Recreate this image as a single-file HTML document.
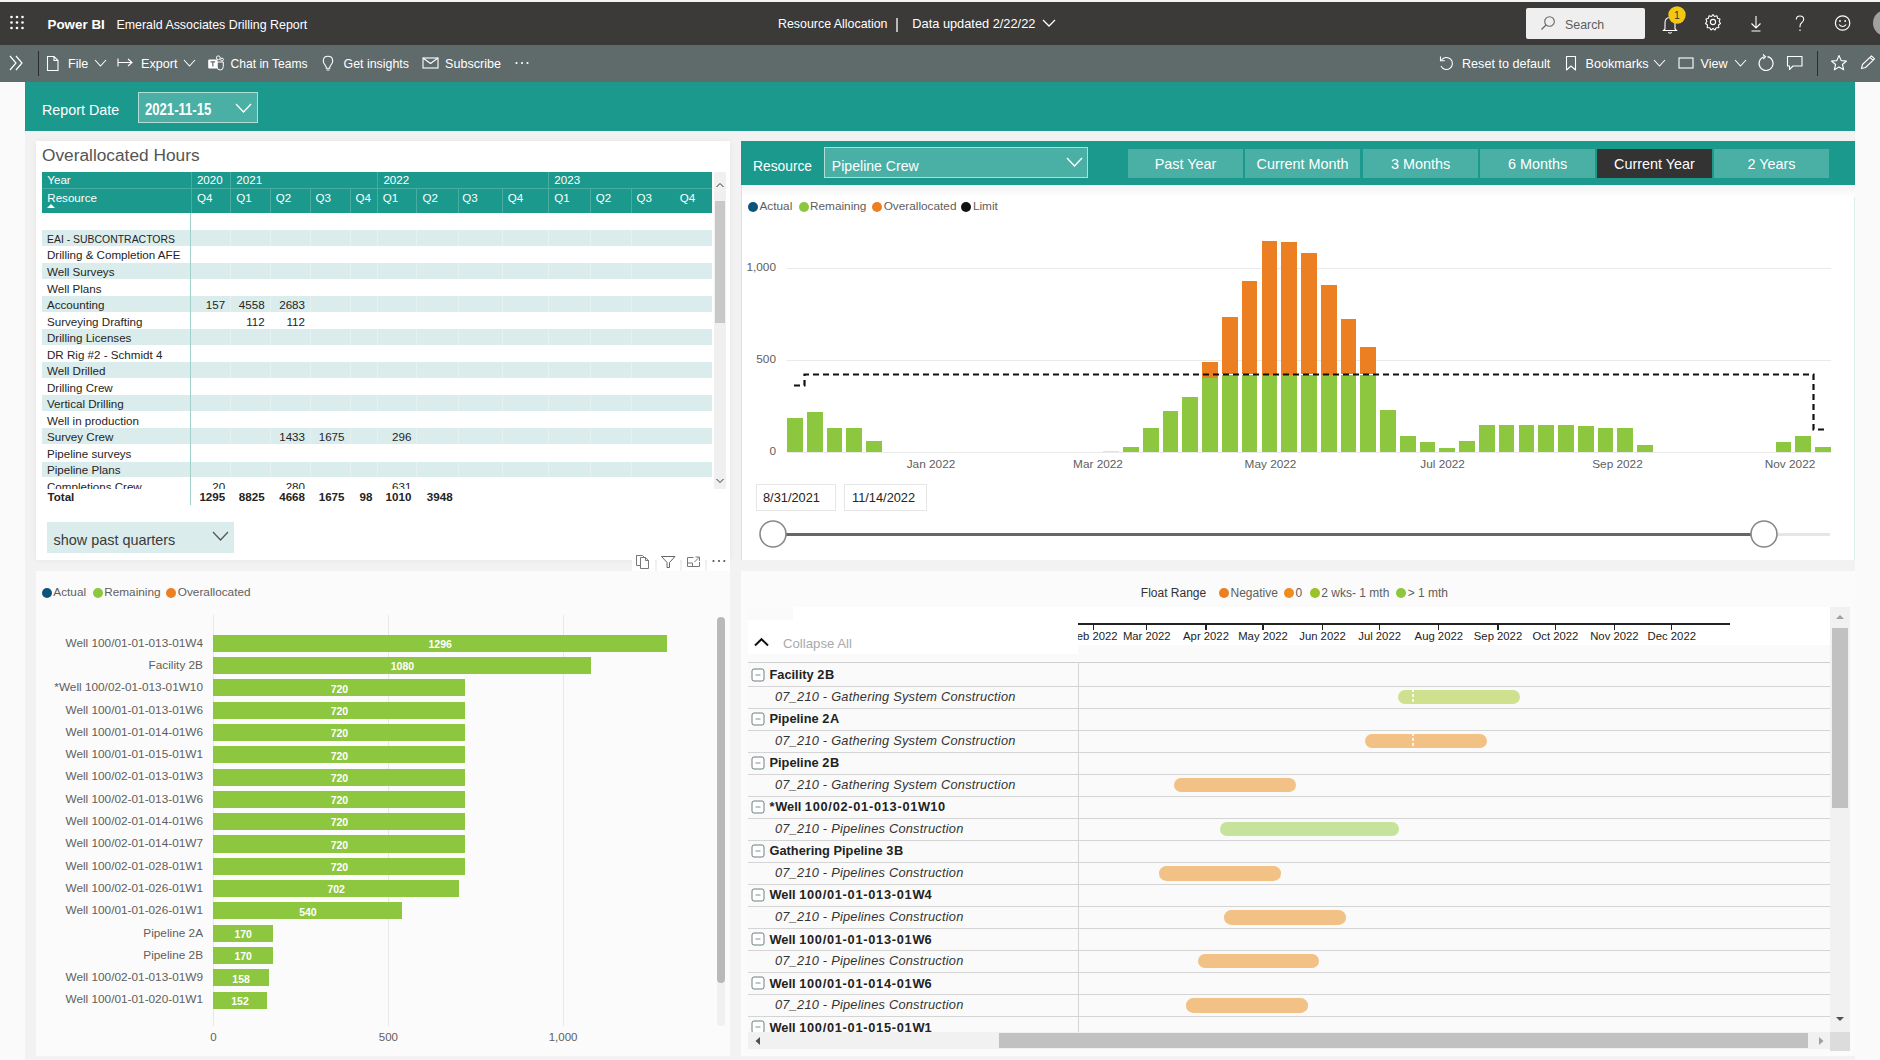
<!DOCTYPE html><html><head><meta charset="utf-8"><style>
html,body{margin:0;padding:0;width:1880px;height:1060px;overflow:hidden;background:#fafafa;font-family:"Liberation Sans", sans-serif;}
div{position:absolute;box-sizing:border-box;}
.t{white-space:nowrap;}
</style></head><body>
<div style="left:0px;top:0px;width:1880px;height:2px;background:#f3f3f3"></div>
<div style="left:0px;top:2px;width:1880px;height:43px;background:#3b3a39"></div>
<svg style="position:absolute;left:0px;top:0px;" width="40" height="45" viewBox="0 0 40 45"><circle cx="11.5" cy="17" r="1.3" fill="#fff"/><circle cx="11.5" cy="22.5" r="1.3" fill="#fff"/><circle cx="11.5" cy="28" r="1.3" fill="#fff"/><circle cx="17" cy="17" r="1.3" fill="#fff"/><circle cx="17" cy="22.5" r="1.3" fill="#fff"/><circle cx="17" cy="28" r="1.3" fill="#fff"/><circle cx="22.5" cy="17" r="1.3" fill="#fff"/><circle cx="22.5" cy="22.5" r="1.3" fill="#fff"/><circle cx="22.5" cy="28" r="1.3" fill="#fff"/></svg>
<div class="t" style="left:47.5px;top:17.7px;font-size:13.4px;line-height:13.4px;color:#fff;font-weight:700">Power BI</div>
<div class="t" style="left:116.5px;top:18.5px;font-size:12.4px;line-height:12.4px;color:#fff">Emerald Associates Drilling Report</div>
<div class="t" style="left:778.0px;top:18.2px;font-size:12.4px;line-height:12.4px;color:#fff">Resource Allocation</div>
<div style="left:896px;top:18px;width:1.6px;height:14px;background:#b8b8b8"></div>
<div class="t" style="left:912.3px;top:17.9px;font-size:12.8px;line-height:12.8px;color:#fff">Data updated 2/22/22</div>
<svg style="position:absolute;left:1040px;top:16px;" width="18" height="14" viewBox="0 0 18 14"><path d="M3 4 L9 10 L15 4" stroke="#fff" stroke-width="1.3" fill="none"/></svg>
<div style="left:1526px;top:8px;width:119px;height:31px;background:#efefef;border-radius:2px"></div>
<svg style="position:absolute;left:1538px;top:14px;" width="20" height="20" viewBox="0 0 20 20"><circle cx="11.5" cy="7.5" r="4.8" stroke="#666" stroke-width="1.1" fill="none"/><path d="M8 11 L3.5 15.5" stroke="#666" stroke-width="1.2"/></svg>
<div class="t" style="left:1565.0px;top:18.7px;font-size:12.4px;line-height:12.4px;color:#605e5c">Search</div>
<svg style="position:absolute;left:1660px;top:10px;" width="22" height="24" viewBox="0 0 22 24"><path d="M5 19 L5 13 Q5 7.5 10 7.5 Q15 7.5 15 13 L15 19 L16.5 20.5 L3.5 20.5 Z" stroke="#fff" stroke-width="1.1" fill="none"/><path d="M8.3 22.3 Q10 23.8 11.7 22.3" stroke="#fff" stroke-width="1.1" fill="none"/></svg>
<svg style="position:absolute;left:1667px;top:5px;" width="20" height="20" viewBox="0 0 20 20"><circle cx="10" cy="10" r="8.7" fill="#f2c811"/><text x="10" y="13.8" font-size="10.5" text-anchor="middle" fill="#333" font-family="Liberation Sans">1</text></svg>
<svg style="position:absolute;left:1703px;top:12px;" width="20" height="20" viewBox="0 0 20 20"><circle cx="10" cy="10" r="2.6" stroke="#fff" stroke-width="1.1" fill="none"/><path d="M10 2.5 L11.5 4.5 L14 3.8 L14.6 6.3 L17 7 L16.2 9.5 L17.5 11.5 L15.5 13 L15.8 15.6 L13.2 15.7 L12 18 L10 16.5 L8 18 L6.8 15.7 L4.2 15.6 L4.5 13 L2.5 11.5 L3.8 9.5 L3 7 L5.4 6.3 L6 3.8 L8.5 4.5 Z" stroke="#fff" stroke-width="1.1" fill="none" stroke-linejoin="round"/></svg>
<svg style="position:absolute;left:1746px;top:12px;" width="20" height="22" viewBox="0 0 20 22"><path d="M10 4 L10 16 M5.5 11.5 L10 16 L14.5 11.5 M5.5 19 L14.5 19" stroke="#fff" stroke-width="1.1" fill="none"/></svg>
<svg style="position:absolute;left:1790px;top:11px;" width="20" height="24" viewBox="0 0 20 24"><path d="M6.3 8.5 Q6.3 5 10 5 Q13.7 5 13.7 8.3 Q13.7 10.5 11.6 11.8 Q10 13 10 15.2 L10 16.3" stroke="#fff" stroke-width="1.1" fill="none"/><circle cx="10" cy="19.3" r="0.8" fill="#fff"/></svg>
<svg style="position:absolute;left:1832px;top:12px;" width="22" height="22" viewBox="0 0 22 22"><circle cx="10.6" cy="11" r="7.2" stroke="#fff" stroke-width="1.2" fill="none"/><circle cx="8" cy="9" r="0.9" fill="#fff"/><circle cx="13.2" cy="9" r="0.9" fill="#fff"/><path d="M7 12.5 Q10.6 16.5 14.2 12.5" stroke="#fff" stroke-width="1.1" fill="none"/></svg>
<svg style="position:absolute;left:1864px;top:8px;" width="16" height="30" viewBox="0 0 16 30"><circle cx="22" cy="15" r="13" fill="#a0a0a0"/></svg>
<div style="left:0px;top:45px;width:1880px;height:37px;background:#5f6a6b"></div>
<svg style="position:absolute;left:6px;top:53px;" width="22" height="20" viewBox="0 0 22 20"><path d="M4 3 L10 10 L4 17 M10 3 L16 10 L10 17" stroke="#fff" stroke-width="1.2" fill="none"/></svg>
<div style="left:38px;top:51px;width:1px;height:25px;background:#2d2d2d"></div>
<svg style="position:absolute;left:45px;top:55px;" width="16" height="17" viewBox="0 0 16 17"><path d="M2.5 1.5 L9 1.5 L13 5.5 L13 15.5 L2.5 15.5 Z M9 1.5 L9 5.5 L13 5.5" stroke="#fff" stroke-width="1.1" fill="none"/></svg>
<div class="t" style="left:68.0px;top:57.8px;font-size:12.6px;line-height:12.6px;color:#fff">File</div>
<svg style="position:absolute;left:93.5px;top:59px;" width="13" height="8" viewBox="0 0 13 8"><path d="M1 1 L6.5 7 L12 1" stroke="#fff" stroke-width="1.1" fill="none"/></svg>
<svg style="position:absolute;left:116px;top:56px;" width="20" height="14" viewBox="0 0 20 14"><path d="M2 2.5 L2 10.5 M2 6.5 L16 6.5 M12 3 L16 6.5 L12 10" stroke="#fff" stroke-width="1.1" fill="none"/></svg>
<div class="t" style="left:141.0px;top:57.8px;font-size:12.6px;line-height:12.6px;color:#fff">Export</div>
<svg style="position:absolute;left:183px;top:59px;" width="13" height="8" viewBox="0 0 13 8"><path d="M1 1 L6.5 7 L12 1" stroke="#fff" stroke-width="1.1" fill="none"/></svg>
<svg style="position:absolute;left:206px;top:54px;" width="20" height="20" viewBox="0 0 20 20"><circle cx="12.3" cy="3.8" r="1.9" stroke="#fff" stroke-width="1" fill="none"/><circle cx="16" cy="5.5" r="1.4" stroke="#fff" stroke-width="1" fill="none"/><path d="M11 8 L17.3 8 L17.3 12.5 Q17.3 16 14.2 16 Q11 16 11 12.5 Z" stroke="#fff" stroke-width="1" fill="none"/><rect x="2.2" y="5.6" width="9.3" height="9" rx="1" fill="#fff"/><path d="M4.6 7.8 L9.1 7.8 M6.85 7.8 L6.85 12.6" stroke="#5f6a6b" stroke-width="1.2"/></svg>
<div class="t" style="left:230.5px;top:58.2px;font-size:12.1px;line-height:12.1px;color:#fff">Chat in Teams</div>
<svg style="position:absolute;left:320px;top:54px;" width="16" height="18" viewBox="0 0 16 18"><path d="M8 2.3 Q3.3 2.3 3.3 7 Q3.3 9.2 5.3 11.3 Q6.2 12.3 6.3 14.3 L9.7 14.3 Q9.8 12.3 10.7 11.3 Q12.7 9.2 12.7 7 Q12.7 2.3 8 2.3 Z M6.5 16 L9.5 16" stroke="#fff" stroke-width="1.1" fill="none"/></svg>
<div class="t" style="left:343.5px;top:58.0px;font-size:12.4px;line-height:12.4px;color:#fff">Get insights</div>
<svg style="position:absolute;left:421px;top:55px;" width="20" height="16" viewBox="0 0 20 16"><rect x="2" y="3" width="15" height="10" stroke="#fff" stroke-width="1.1" fill="none"/><path d="M2 3 L9.5 8.5 L17 3" stroke="#fff" stroke-width="1.1" fill="none"/></svg>
<div class="t" style="left:445.0px;top:57.8px;font-size:12.6px;line-height:12.6px;color:#fff">Subscribe</div>
<svg style="position:absolute;left:512px;top:58px;" width="20" height="10" viewBox="0 0 20 10"><circle cx="4.5" cy="5" r="1.1" fill="#fff"/><circle cx="10" cy="5" r="1.1" fill="#fff"/><circle cx="15.5" cy="5" r="1.1" fill="#fff"/></svg>
<svg style="position:absolute;left:1437px;top:54px;" width="18" height="18" viewBox="0 0 18 18"><path d="M4.5 6 A6 6 0 1 1 4 12" stroke="#fff" stroke-width="1.1" fill="none"/><path d="M3.5 2.5 L3.5 6.8 L7.8 6.8" stroke="#fff" stroke-width="1.1" fill="none"/></svg>
<div class="t" style="left:1462.0px;top:57.8px;font-size:12.6px;line-height:12.6px;color:#fff">Reset to default</div>
<svg style="position:absolute;left:1563px;top:54px;" width="16" height="18" viewBox="0 0 16 18"><path d="M3.5 2.5 L12.5 2.5 L12.5 16 L8 12 L3.5 16 Z" stroke="#fff" stroke-width="1.1" fill="none" stroke-linejoin="round"/></svg>
<div class="t" style="left:1585.5px;top:57.8px;font-size:12.6px;line-height:12.6px;color:#fff">Bookmarks</div>
<svg style="position:absolute;left:1653px;top:59px;" width="13" height="8" viewBox="0 0 13 8"><path d="M1 1 L6.5 7 L12 1" stroke="#fff" stroke-width="1.1" fill="none"/></svg>
<svg style="position:absolute;left:1677px;top:55px;" width="18" height="16" viewBox="0 0 18 16"><rect x="2" y="3" width="14" height="10" stroke="#fff" stroke-width="1.1" fill="none"/></svg>
<div class="t" style="left:1700.5px;top:57.8px;font-size:12.6px;line-height:12.6px;color:#fff">View</div>
<svg style="position:absolute;left:1734px;top:59px;" width="13" height="8" viewBox="0 0 13 8"><path d="M1 1 L6.5 7 L12 1" stroke="#fff" stroke-width="1.1" fill="none"/></svg>
<svg style="position:absolute;left:1756px;top:53px;" width="20" height="20" viewBox="0 0 20 20"><path d="M8.2 3.7 A7 7 0 1 0 11.5 3.6" stroke="#fff" stroke-width="1.1" fill="none"/><path d="M7 1.5 L9.5 3.8 L7.2 6.2" stroke="#fff" stroke-width="1.1" fill="none"/></svg>
<svg style="position:absolute;left:1785px;top:54px;" width="20" height="18" viewBox="0 0 20 18"><path d="M2.5 2.5 L17 2.5 L17 12 L8 12 L4.5 15.5 L4.5 12 L2.5 12 Z" stroke="#fff" stroke-width="1.1" fill="none" stroke-linejoin="round"/></svg>
<div style="left:1817px;top:51px;width:1px;height:25px;background:#2d2d2d"></div>
<svg style="position:absolute;left:1830px;top:54px;" width="18" height="18" viewBox="0 0 18 18"><path d="M9 1.5 L11.2 6.6 L16.5 7 L12.4 10.5 L13.7 15.8 L9 13 L4.3 15.8 L5.6 10.5 L1.5 7 L6.8 6.6 Z" stroke="#fff" stroke-width="1.1" fill="none" stroke-linejoin="round"/></svg>
<svg style="position:absolute;left:1858px;top:54px;" width="20" height="18" viewBox="0 0 20 18"><path d="M3.5 14.5 L4.5 10.5 L13.5 1.8 L16.5 4.8 L7.5 13.5 Z M12 3.3 L15 6.3" stroke="#fff" stroke-width="1.1" fill="none" stroke-linejoin="round"/></svg>
<div style="left:25px;top:82px;width:1830px;height:978px;background:#f2f2f2"></div>
<div style="left:25px;top:82px;width:1830px;height:49px;background:#1b998d"></div>
<div class="t" style="left:42.0px;top:102.8px;font-size:14.3px;line-height:14.3px;color:#fff">Report Date</div>
<div style="left:138px;top:92px;width:120px;height:31px;background:#4aafa5;border:1.5px solid #b5ddd8"></div>
<div class="t" style="left:144.7px;top:102.2px;font-size:15.6px;line-height:15.6px;color:#fff;font-weight:700;transform:scaleX(0.84);transform-origin:0 0">2021-11-15</div>
<svg style="position:absolute;left:235px;top:102.5px;" width="17" height="10" viewBox="0 0 17 10"><path d="M1 1 L8.5 9 L16 1" stroke="#fff" stroke-width="1.3" fill="none"/></svg>
<div style="left:36px;top:141px;width:694px;height:419px;background:#fff;box-shadow:0 0 6px rgba(0,0,0,0.06)"></div>
<div class="t" style="left:42.0px;top:146.6px;font-size:17.3px;line-height:17.3px;color:#555">Overallocated Hours</div>
<div style="left:42px;top:172px;width:670px;height:40.5px;background:#1b998d"></div>
<div style="left:42px;top:187.5px;width:670px;height:1px;background:#48aca1"></div>
<div style="left:191px;top:172px;width:1px;height:40.5px;background:#48aca1"></div>
<div style="left:230px;top:172px;width:1px;height:40.5px;background:#48aca1"></div>
<div style="left:270px;top:188px;width:1px;height:24.5px;background:#48aca1"></div>
<div style="left:310px;top:188px;width:1px;height:24.5px;background:#48aca1"></div>
<div style="left:350px;top:188px;width:1px;height:24.5px;background:#48aca1"></div>
<div style="left:377px;top:172px;width:1px;height:40.5px;background:#48aca1"></div>
<div style="left:416px;top:188px;width:1px;height:24.5px;background:#48aca1"></div>
<div style="left:458px;top:188px;width:1px;height:24.5px;background:#48aca1"></div>
<div style="left:502px;top:188px;width:1px;height:24.5px;background:#48aca1"></div>
<div style="left:548px;top:172px;width:1px;height:40.5px;background:#48aca1"></div>
<div style="left:590px;top:188px;width:1px;height:24.5px;background:#48aca1"></div>
<div style="left:631px;top:188px;width:1px;height:24.5px;background:#48aca1"></div>
<div class="t" style="left:47.3px;top:174.4px;font-size:11.6px;line-height:11.6px;color:#fff">Year</div>
<div class="t" style="left:47.3px;top:191.7px;font-size:11.6px;line-height:11.6px;color:#fff">Resource</div>
<svg style="position:absolute;left:45px;top:203px;" width="12" height="6" viewBox="0 0 12 6"><path d="M2 5 L6 1 L10 5 Z" fill="#fff"/></svg>
<div class="t" style="left:196.9px;top:174.4px;font-size:11.6px;line-height:11.6px;color:#fff">2020</div>
<div class="t" style="left:236.3px;top:174.4px;font-size:11.6px;line-height:11.6px;color:#fff">2021</div>
<div class="t" style="left:383.4px;top:174.4px;font-size:11.6px;line-height:11.6px;color:#fff">2022</div>
<div class="t" style="left:554.3px;top:174.4px;font-size:11.6px;line-height:11.6px;color:#fff">2023</div>
<div class="t" style="left:196.9px;top:191.7px;font-size:11.6px;line-height:11.6px;color:#fff">Q4</div>
<div class="t" style="left:236.3px;top:191.7px;font-size:11.6px;line-height:11.6px;color:#fff">Q1</div>
<div class="t" style="left:275.7px;top:191.7px;font-size:11.6px;line-height:11.6px;color:#fff">Q2</div>
<div class="t" style="left:315.5px;top:191.7px;font-size:11.6px;line-height:11.6px;color:#fff">Q3</div>
<div class="t" style="left:355.6px;top:191.7px;font-size:11.6px;line-height:11.6px;color:#fff">Q4</div>
<div class="t" style="left:382.8px;top:191.7px;font-size:11.6px;line-height:11.6px;color:#fff">Q1</div>
<div class="t" style="left:422.5px;top:191.7px;font-size:11.6px;line-height:11.6px;color:#fff">Q2</div>
<div class="t" style="left:462.3px;top:191.7px;font-size:11.6px;line-height:11.6px;color:#fff">Q3</div>
<div class="t" style="left:507.7px;top:191.7px;font-size:11.6px;line-height:11.6px;color:#fff">Q4</div>
<div class="t" style="left:554.3px;top:191.7px;font-size:11.6px;line-height:11.6px;color:#fff">Q1</div>
<div class="t" style="left:595.8px;top:191.7px;font-size:11.6px;line-height:11.6px;color:#fff">Q2</div>
<div class="t" style="left:636.6px;top:191.7px;font-size:11.6px;line-height:11.6px;color:#fff">Q3</div>
<div class="t" style="left:679.7px;top:191.7px;font-size:11.6px;line-height:11.6px;color:#fff">Q4</div>
<div style="left:0;top:213px;width:730px;height:276px;overflow:hidden">
<div style="left:42px;top:17.0px;width:670px;height:15.9px;background:#daeceb"></div>
<div class="t" style="left:47px;top:19.9px;font-size:11.6px;line-height:11.6px;color:#252423;transform:scaleX(0.9);transform-origin:0 0">EAI - SUBCONTRACTORS</div>
<div class="t" style="left:47px;top:36.4px;font-size:11.6px;line-height:11.6px;color:#252423">Drilling &amp; Completion AFE</div>
<div style="left:42px;top:50.1px;width:670px;height:15.9px;background:#daeceb"></div>
<div class="t" style="left:47px;top:52.9px;font-size:11.6px;line-height:11.6px;color:#252423">Well Surveys</div>
<div class="t" style="left:47px;top:69.5px;font-size:11.6px;line-height:11.6px;color:#252423">Well Plans</div>
<div style="left:42px;top:83.2px;width:670px;height:15.9px;background:#daeceb"></div>
<div class="t" style="left:47px;top:86.0px;font-size:11.6px;line-height:11.6px;color:#252423">Accounting</div>
<div class="t" style="right:504.8px;top:86.0px;font-size:11.6px;line-height:11.6px;color:#252423;text-align:right">157</div>
<div class="t" style="right:465.4px;top:86.0px;font-size:11.6px;line-height:11.6px;color:#252423;text-align:right">4558</div>
<div class="t" style="right:425.0px;top:86.0px;font-size:11.6px;line-height:11.6px;color:#252423;text-align:right">2683</div>
<div class="t" style="left:47px;top:102.5px;font-size:11.6px;line-height:11.6px;color:#252423">Surveying Drafting</div>
<div class="t" style="right:465.4px;top:102.5px;font-size:11.6px;line-height:11.6px;color:#252423;text-align:right">112</div>
<div class="t" style="right:425.0px;top:102.5px;font-size:11.6px;line-height:11.6px;color:#252423;text-align:right">112</div>
<div style="left:42px;top:116.2px;width:670px;height:15.9px;background:#daeceb"></div>
<div class="t" style="left:47px;top:119.1px;font-size:11.6px;line-height:11.6px;color:#252423">Drilling Licenses</div>
<div class="t" style="left:47px;top:135.6px;font-size:11.6px;line-height:11.6px;color:#252423">DR Rig #2 - Schmidt 4</div>
<div style="left:42px;top:149.3px;width:670px;height:15.9px;background:#daeceb"></div>
<div class="t" style="left:47px;top:152.1px;font-size:11.6px;line-height:11.6px;color:#252423">Well Drilled</div>
<div class="t" style="left:47px;top:168.7px;font-size:11.6px;line-height:11.6px;color:#252423">Drilling Crew</div>
<div style="left:42px;top:182.3px;width:670px;height:15.9px;background:#daeceb"></div>
<div class="t" style="left:47px;top:185.2px;font-size:11.6px;line-height:11.6px;color:#252423">Vertical Drilling</div>
<div class="t" style="left:47px;top:201.7px;font-size:11.6px;line-height:11.6px;color:#252423">Well in production</div>
<div style="left:42px;top:215.4px;width:670px;height:15.9px;background:#daeceb"></div>
<div class="t" style="left:47px;top:218.2px;font-size:11.6px;line-height:11.6px;color:#252423">Survey Crew</div>
<div class="t" style="right:425.0px;top:218.2px;font-size:11.6px;line-height:11.6px;color:#252423;text-align:right">1433</div>
<div class="t" style="right:385.5px;top:218.2px;font-size:11.6px;line-height:11.6px;color:#252423;text-align:right">1675</div>
<div class="t" style="right:318.6px;top:218.2px;font-size:11.6px;line-height:11.6px;color:#252423;text-align:right">296</div>
<div class="t" style="left:47px;top:234.8px;font-size:11.6px;line-height:11.6px;color:#252423">Pipeline surveys</div>
<div style="left:42px;top:248.5px;width:670px;height:15.9px;background:#daeceb"></div>
<div class="t" style="left:47px;top:251.3px;font-size:11.6px;line-height:11.6px;color:#252423">Pipeline Plans</div>
<div class="t" style="left:47px;top:267.8px;font-size:11.6px;line-height:11.6px;color:#252423">Completions Crew</div>
<div class="t" style="right:504.8px;top:267.8px;font-size:11.6px;line-height:11.6px;color:#252423;text-align:right">20</div>
<div class="t" style="right:425.0px;top:267.8px;font-size:11.6px;line-height:11.6px;color:#252423;text-align:right">280</div>
<div class="t" style="right:318.6px;top:267.8px;font-size:11.6px;line-height:11.6px;color:#252423;text-align:right">631</div>
<div style="left:230px;top:0;width:1px;height:276px;background:rgba(255,255,255,0.3)"></div>
<div style="left:270px;top:0;width:1px;height:276px;background:rgba(255,255,255,0.3)"></div>
<div style="left:310px;top:0;width:1px;height:276px;background:rgba(255,255,255,0.3)"></div>
<div style="left:350px;top:0;width:1px;height:276px;background:rgba(255,255,255,0.3)"></div>
<div style="left:377px;top:0;width:1px;height:276px;background:rgba(255,255,255,0.3)"></div>
<div style="left:416px;top:0;width:1px;height:276px;background:rgba(255,255,255,0.3)"></div>
<div style="left:458px;top:0;width:1px;height:276px;background:rgba(255,255,255,0.3)"></div>
<div style="left:502px;top:0;width:1px;height:276px;background:rgba(255,255,255,0.3)"></div>
<div style="left:548px;top:0;width:1px;height:276px;background:rgba(255,255,255,0.3)"></div>
<div style="left:590px;top:0;width:1px;height:276px;background:rgba(255,255,255,0.3)"></div>
<div style="left:631px;top:0;width:1px;height:276px;background:rgba(255,255,255,0.3)"></div>
</div>
<div style="left:190px;top:213px;width:1px;height:292px;background:#9fd0ca"></div>
<div class="t" style="right:1654.8px;top:491.4px;font-size:11.6px;line-height:11.6px;text-align:right;color:#252423;font-weight:700">1295</div>
<div class="t" style="right:1615.4px;top:491.4px;font-size:11.6px;line-height:11.6px;text-align:right;color:#252423;font-weight:700">8825</div>
<div class="t" style="right:1575.0px;top:491.4px;font-size:11.6px;line-height:11.6px;text-align:right;color:#252423;font-weight:700">4668</div>
<div class="t" style="right:1535.5px;top:491.4px;font-size:11.6px;line-height:11.6px;text-align:right;color:#252423;font-weight:700">1675</div>
<div class="t" style="right:1507.6px;top:491.4px;font-size:11.6px;line-height:11.6px;text-align:right;color:#252423;font-weight:700">98</div>
<div class="t" style="right:1468.6px;top:491.4px;font-size:11.6px;line-height:11.6px;text-align:right;color:#252423;font-weight:700">1010</div>
<div class="t" style="right:1427.4px;top:491.4px;font-size:11.6px;line-height:11.6px;text-align:right;color:#252423;font-weight:700">3948</div>
<div class="t" style="left:47.5px;top:491.4px;font-size:11.6px;line-height:11.6px;color:#252423;font-weight:700">Total</div>
<div style="left:714px;top:172px;width:12px;height:317px;background:#f0f0f0"></div>
<div style="left:715px;top:201px;width:10px;height:122px;background:#c8c8c8"></div>
<svg style="position:absolute;left:714px;top:180px;" width="12" height="10" viewBox="0 0 12 10"><path d="M2.5 7 L6 3.5 L9.5 7" stroke="#333" stroke-width="1" fill="none"/></svg>
<svg style="position:absolute;left:714px;top:476px;" width="12" height="10" viewBox="0 0 12 10"><path d="M2.5 3 L6 6.5 L9.5 3" stroke="#333" stroke-width="1" fill="none"/></svg>
<div style="left:47px;top:522.4px;width:187px;height:30.2px;background:#daeceb"></div>
<div class="t" style="left:53.6px;top:532.5px;font-size:14.4px;line-height:14.4px;color:#3a3a3a">show past quarters</div>
<svg style="position:absolute;left:212px;top:531px;" width="17" height="10" viewBox="0 0 17 10"><path d="M1 1 L8.5 9 L16 1" stroke="#555" stroke-width="1.2" fill="none"/></svg>
<div style="left:632px;top:551px;width:23px;height:20px;background:#fff"></div>
<div style="left:657px;top:551px;width:23px;height:20px;background:#fff"></div>
<div style="left:682px;top:551px;width:23px;height:20px;background:#fff"></div>
<div style="left:707px;top:551px;width:23px;height:20px;background:#fff"></div>
<svg style="position:absolute;left:632px;top:551px;" width="23" height="20" viewBox="0 0 23 20"><path d="M7.5 4.5 L4.5 4.5 L4.5 14.5 L8 14.5 M8.5 6.5 L13.5 6.5 L16.5 9.5 L16.5 17.5 L8.5 17.5 Z M13.5 6.5 L13.5 9.5 L16.5 9.5 M4.5 4.5 L10.5 4.5 L12.5 6.5" stroke="#777" stroke-width="1" fill="none"/></svg>
<svg style="position:absolute;left:657px;top:551px;" width="23" height="20" viewBox="0 0 23 20"><path d="M4.5 5.5 L18 5.5 L12.5 11.5 L12.5 16.5 L10 16.5 L10 11.5 Z" stroke="#666" stroke-width="1" fill="none" stroke-linejoin="round"/></svg>
<svg style="position:absolute;left:682px;top:551px;" width="23" height="20" viewBox="0 0 23 20"><path d="M11.5 6.5 L5.5 6.5 L5.5 15.5 L17.5 15.5 L17.5 11 M5.5 12 L10.5 12 L10.5 15.5 M12.5 11 L17 6.5 M13.5 6 L17.5 6 L17.5 10" stroke="#777" stroke-width="1" fill="none"/></svg>
<svg style="position:absolute;left:707px;top:551px;" width="23" height="20" viewBox="0 0 23 20"><circle cx="6.5" cy="10" r="1.1" fill="#555"/><circle cx="12" cy="10" r="1.1" fill="#555"/><circle cx="17.3" cy="10" r="1.1" fill="#555"/></svg>
<div style="left:741px;top:141px;width:1114px;height:332px;background:#fff;border-left:1px solid #cfe6e3;border-right:1px solid #dcefed"></div>
<div style="left:741px;top:141px;width:1114px;height:44px;background:#1b998d"></div>
<div class="t" style="left:753.0px;top:160.1px;font-size:13.8px;line-height:13.8px;color:#fff">Resource</div>
<div style="left:824px;top:147px;width:264px;height:31px;background:#4aafa5;border:1.5px solid #b5ddd8"></div>
<div class="t" style="left:831.8px;top:158.8px;font-size:14.1px;line-height:14.1px;color:#fff">Pipeline Crew</div>
<svg style="position:absolute;left:1066px;top:157px;" width="17" height="10" viewBox="0 0 17 10"><path d="M1 1 L8.5 9 L16 1" stroke="#fff" stroke-width="1.4" fill="none"/></svg>
<div style="left:1128px;top:149px;width:115px;height:29px;background:#4aafa5"></div>
<div class="t" style="left:1035.5px;width:300px;top:156.8px;font-size:14.4px;line-height:14.4px;text-align:center;color:#fff">Past Year</div>
<div style="left:1245px;top:149px;width:115px;height:29px;background:#4aafa5"></div>
<div class="t" style="left:1152.5px;width:300px;top:156.8px;font-size:14.4px;line-height:14.4px;text-align:center;color:#fff">Current Month</div>
<div style="left:1363px;top:149px;width:115px;height:29px;background:#4aafa5"></div>
<div class="t" style="left:1270.5px;width:300px;top:156.8px;font-size:14.4px;line-height:14.4px;text-align:center;color:#fff">3 Months</div>
<div style="left:1480px;top:149px;width:115px;height:29px;background:#4aafa5"></div>
<div class="t" style="left:1387.5px;width:300px;top:156.8px;font-size:14.4px;line-height:14.4px;text-align:center;color:#fff">6 Months</div>
<div style="left:1597px;top:149px;width:115px;height:29px;background:#333333"></div>
<div class="t" style="left:1504.5px;width:300px;top:156.8px;font-size:14.4px;line-height:14.4px;text-align:center;color:#fff">Current Year</div>
<div style="left:1714px;top:149px;width:115px;height:29px;background:#4aafa5"></div>
<div class="t" style="left:1621.5px;width:300px;top:156.8px;font-size:14.4px;line-height:14.4px;text-align:center;color:#fff">2 Years</div>
<div style="left:742px;top:185px;width:1113px;height:12px;background:linear-gradient(#f3f3f3,#fff)"></div>
<svg style="position:absolute;left:747px;top:200.5px;" width="12" height="12" viewBox="0 0 12 12"><circle cx="6" cy="6" r="5" fill="#0c5479"/></svg>
<div class="t" style="left:759.5px;top:201.0px;font-size:11.8px;line-height:11.8px;color:#605e5c">Actual</div>
<svg style="position:absolute;left:797.5px;top:200.5px;" width="12" height="12" viewBox="0 0 12 12"><circle cx="6" cy="6" r="5" fill="#8dc63f"/></svg>
<div class="t" style="left:810.0px;top:201.0px;font-size:11.8px;line-height:11.8px;color:#605e5c">Remaining</div>
<svg style="position:absolute;left:871.2px;top:200.5px;" width="12" height="12" viewBox="0 0 12 12"><circle cx="6" cy="6" r="5" fill="#ec7f22"/></svg>
<div class="t" style="left:883.7px;top:201.0px;font-size:11.8px;line-height:11.8px;color:#605e5c">Overallocated</div>
<svg style="position:absolute;left:960.4px;top:200.5px;" width="12" height="12" viewBox="0 0 12 12"><circle cx="6" cy="6" r="5" fill="#111"/></svg>
<div class="t" style="left:972.9px;top:201.0px;font-size:11.8px;line-height:11.8px;color:#605e5c">Limit</div>
<div style="left:787px;top:267.5px;width:1044px;height:1px;background:#eaeaea"></div>
<div class="t" style="right:1104.0px;top:261.9px;font-size:11.8px;line-height:11.8px;text-align:right;color:#605e5c">1,000</div>
<div style="left:787px;top:359.5px;width:1044px;height:1px;background:#eaeaea"></div>
<div class="t" style="right:1104.0px;top:354.3px;font-size:11.8px;line-height:11.8px;text-align:right;color:#605e5c">500</div>
<div style="left:787px;top:451.5px;width:1044px;height:1px;background:#eaeaea"></div>
<div class="t" style="right:1104.0px;top:446.3px;font-size:11.8px;line-height:11.8px;text-align:right;color:#605e5c">0</div>
<div style="left:787.0px;top:418px;width:15.8px;height:33.9px;background:#8dc63f"></div>
<div style="left:806.8px;top:411.9px;width:15.8px;height:40.0px;background:#8dc63f"></div>
<div style="left:826.5px;top:427.8px;width:15.8px;height:24.1px;background:#8dc63f"></div>
<div style="left:846.3px;top:428.2px;width:15.8px;height:23.7px;background:#8dc63f"></div>
<div style="left:866.1px;top:441px;width:15.8px;height:10.9px;background:#8dc63f"></div>
<div style="left:1103.3px;top:450.5px;width:15.8px;height:1.4px;background:#d9ecbf"></div>
<div style="left:1123.1px;top:446.8px;width:15.8px;height:5.1px;background:#8dc63f"></div>
<div style="left:1142.9px;top:428.2px;width:15.8px;height:23.7px;background:#8dc63f"></div>
<div style="left:1162.6px;top:410.8px;width:15.8px;height:41.1px;background:#8dc63f"></div>
<div style="left:1182.4px;top:397.2px;width:15.8px;height:54.7px;background:#8dc63f"></div>
<div style="left:1202.2px;top:377.9px;width:15.8px;height:74.0px;background:#8dc63f"></div>
<div style="left:1202.2px;top:361.9px;width:15.8px;height:16.0px;background:#ec7f22"></div>
<div style="left:1221.9px;top:374.5px;width:15.8px;height:77.4px;background:#8dc63f"></div>
<div style="left:1221.9px;top:316.8px;width:15.8px;height:57.7px;background:#ec7f22"></div>
<div style="left:1241.7px;top:374.5px;width:15.8px;height:77.4px;background:#8dc63f"></div>
<div style="left:1241.7px;top:281.1px;width:15.8px;height:93.4px;background:#ec7f22"></div>
<div style="left:1261.5px;top:374.5px;width:15.8px;height:77.4px;background:#8dc63f"></div>
<div style="left:1261.5px;top:241px;width:15.8px;height:133.5px;background:#ec7f22"></div>
<div style="left:1281.2px;top:374.5px;width:15.8px;height:77.4px;background:#8dc63f"></div>
<div style="left:1281.2px;top:242px;width:15.8px;height:132.5px;background:#ec7f22"></div>
<div style="left:1301.0px;top:374.5px;width:15.8px;height:77.4px;background:#8dc63f"></div>
<div style="left:1301.0px;top:253.3px;width:15.8px;height:121.2px;background:#ec7f22"></div>
<div style="left:1320.8px;top:374.5px;width:15.8px;height:77.4px;background:#8dc63f"></div>
<div style="left:1320.8px;top:284.5px;width:15.8px;height:90.0px;background:#ec7f22"></div>
<div style="left:1340.6px;top:374.5px;width:15.8px;height:77.4px;background:#8dc63f"></div>
<div style="left:1340.6px;top:319.2px;width:15.8px;height:55.3px;background:#ec7f22"></div>
<div style="left:1360.3px;top:374.5px;width:15.8px;height:77.4px;background:#8dc63f"></div>
<div style="left:1360.3px;top:346.7px;width:15.8px;height:27.8px;background:#ec7f22"></div>
<div style="left:1380.1px;top:409.5px;width:15.8px;height:42.4px;background:#8dc63f"></div>
<div style="left:1399.9px;top:436px;width:15.8px;height:15.9px;background:#8dc63f"></div>
<div style="left:1419.6px;top:442px;width:15.8px;height:9.9px;background:#8dc63f"></div>
<div style="left:1439.4px;top:447.8px;width:15.8px;height:4.1px;background:#8dc63f"></div>
<div style="left:1459.2px;top:440.7px;width:15.8px;height:11.2px;background:#8dc63f"></div>
<div style="left:1478.9px;top:424.8px;width:15.8px;height:27.1px;background:#8dc63f"></div>
<div style="left:1498.7px;top:424.8px;width:15.8px;height:27.1px;background:#8dc63f"></div>
<div style="left:1518.5px;top:424.8px;width:15.8px;height:27.1px;background:#8dc63f"></div>
<div style="left:1538.3px;top:424.8px;width:15.8px;height:27.1px;background:#8dc63f"></div>
<div style="left:1558.0px;top:424.8px;width:15.8px;height:27.1px;background:#8dc63f"></div>
<div style="left:1577.8px;top:425.8px;width:15.8px;height:26.1px;background:#8dc63f"></div>
<div style="left:1597.6px;top:428.2px;width:15.8px;height:23.7px;background:#8dc63f"></div>
<div style="left:1617.3px;top:428.2px;width:15.8px;height:23.7px;background:#8dc63f"></div>
<div style="left:1637.1px;top:445.1px;width:15.8px;height:6.8px;background:#8dc63f"></div>
<div style="left:1775.5px;top:442px;width:15.8px;height:9.9px;background:#8dc63f"></div>
<div style="left:1795.3px;top:436px;width:15.8px;height:15.9px;background:#8dc63f"></div>
<div style="left:1815.0px;top:446.8px;width:15.8px;height:5.1px;background:#8dc63f"></div>
<svg style="position:absolute;left:787px;top:365px;" width="1050" height="75" viewBox="0 0 1050 75"><path d="M7 20.5 L17.5 20.5 L17.5 9.5 L1026.5 9.5 L1026.5 64.5 L1037.5 64.5" stroke="#111" stroke-width="2.2" fill="none" stroke-dasharray="6,4"/></svg>
<div class="t" style="left:781.0px;width:300px;top:459.0px;font-size:11.8px;line-height:11.8px;text-align:center;color:#605e5c">Jan 2022</div>
<div class="t" style="left:948.0px;width:300px;top:459.0px;font-size:11.8px;line-height:11.8px;text-align:center;color:#605e5c">Mar 2022</div>
<div class="t" style="left:1120.5px;width:300px;top:459.0px;font-size:11.8px;line-height:11.8px;text-align:center;color:#605e5c">May 2022</div>
<div class="t" style="left:1292.6px;width:300px;top:459.0px;font-size:11.8px;line-height:11.8px;text-align:center;color:#605e5c">Jul 2022</div>
<div class="t" style="left:1467.5px;width:300px;top:459.0px;font-size:11.8px;line-height:11.8px;text-align:center;color:#605e5c">Sep 2022</div>
<div class="t" style="left:1640.0px;width:300px;top:459.0px;font-size:11.8px;line-height:11.8px;text-align:center;color:#605e5c">Nov 2022</div>
<div style="left:741px;top:473px;width:1114px;height:87px;background:#fff;border-left:1px solid #cfe6e3;border-right:1px solid #dcefed"></div>
<div style="left:756px;top:484px;width:80px;height:27px;background:#fff;border:1px solid #e6e6e6"></div>
<div class="t" style="left:763.0px;top:492.4px;font-size:12.8px;line-height:12.8px;color:#252423">8/31/2021</div>
<div style="left:844px;top:484px;width:83px;height:27px;background:#fff;border:1px solid #e6e6e6"></div>
<div class="t" style="left:852.0px;top:492.4px;font-size:12.8px;line-height:12.8px;color:#252423">11/14/2022</div>
<div style="left:773px;top:533px;width:991px;height:3px;background:#666"></div>
<div style="left:1764px;top:533px;width:66px;height:3px;background:#e6e6e6"></div>
<svg style="position:absolute;left:758px;top:519px;" width="30" height="30" viewBox="0 0 30 30"><circle cx="15" cy="15" r="13" fill="#fff" stroke="#888" stroke-width="1.6"/></svg>
<svg style="position:absolute;left:1749px;top:519px;" width="30" height="30" viewBox="0 0 30 30"><circle cx="15" cy="15" r="13" fill="#fff" stroke="#888" stroke-width="1.6"/></svg>
<div style="left:36px;top:571px;width:694px;height:485px;background:#fbfbfb"></div>
<svg style="position:absolute;left:40.8px;top:586.5px;" width="12" height="12" viewBox="0 0 12 12"><circle cx="6" cy="6" r="5" fill="#0c5479"/></svg>
<div class="t" style="left:53.3px;top:587.0px;font-size:11.8px;line-height:11.8px;color:#605e5c">Actual</div>
<svg style="position:absolute;left:91.7px;top:586.5px;" width="12" height="12" viewBox="0 0 12 12"><circle cx="6" cy="6" r="5" fill="#8dc63f"/></svg>
<div class="t" style="left:104.2px;top:587.0px;font-size:11.8px;line-height:11.8px;color:#605e5c">Remaining</div>
<svg style="position:absolute;left:165.3px;top:586.5px;" width="12" height="12" viewBox="0 0 12 12"><circle cx="6" cy="6" r="5" fill="#ec7f22"/></svg>
<div class="t" style="left:177.8px;top:587.0px;font-size:11.8px;line-height:11.8px;color:#605e5c">Overallocated</div>
<div style="left:213px;top:615px;width:1px;height:411px;background:#e8e8e8"></div>
<div class="t" style="left:63.4px;width:300px;top:1031.9px;font-size:11.5px;line-height:11.5px;text-align:center;color:#605e5c">0</div>
<div style="left:388px;top:615px;width:1px;height:411px;background:#e8e8e8"></div>
<div class="t" style="left:238.4px;width:300px;top:1031.9px;font-size:11.5px;line-height:11.5px;text-align:center;color:#605e5c">500</div>
<div style="left:563px;top:615px;width:1px;height:411px;background:#e8e8e8"></div>
<div class="t" style="left:413.1px;width:300px;top:1031.9px;font-size:11.5px;line-height:11.5px;text-align:center;color:#605e5c">1,000</div>
<div style="left:213.4px;top:634.7px;width:453.6px;height:17.2px;background:#8dc63f"></div>
<div class="t" style="right:1677.0px;top:637.6px;font-size:11.8px;line-height:11.8px;text-align:right;color:#605e5c">Well 100/01-01-013-01W4</div>
<div class="t" style="left:290.2px;width:300px;top:639.0px;font-size:10.5px;line-height:10.5px;text-align:center;color:#fff;font-weight:700">1296</div>
<div style="left:213.4px;top:657.0px;width:378.0px;height:17.2px;background:#8dc63f"></div>
<div class="t" style="right:1677.0px;top:659.9px;font-size:11.8px;line-height:11.8px;text-align:right;color:#605e5c">Facility 2B</div>
<div class="t" style="left:252.4px;width:300px;top:661.3px;font-size:10.5px;line-height:10.5px;text-align:center;color:#fff;font-weight:700">1080</div>
<div style="left:213.4px;top:679.3px;width:252.0px;height:17.2px;background:#8dc63f"></div>
<div class="t" style="right:1677.0px;top:682.2px;font-size:11.8px;line-height:11.8px;text-align:right;color:#605e5c">*Well 100/02-01-013-01W10</div>
<div class="t" style="left:189.4px;width:300px;top:683.6px;font-size:10.5px;line-height:10.5px;text-align:center;color:#fff;font-weight:700">720</div>
<div style="left:213.4px;top:701.6px;width:252.0px;height:17.2px;background:#8dc63f"></div>
<div class="t" style="right:1677.0px;top:704.5px;font-size:11.8px;line-height:11.8px;text-align:right;color:#605e5c">Well 100/01-01-013-01W6</div>
<div class="t" style="left:189.4px;width:300px;top:705.9px;font-size:10.5px;line-height:10.5px;text-align:center;color:#fff;font-weight:700">720</div>
<div style="left:213.4px;top:723.9px;width:252.0px;height:17.2px;background:#8dc63f"></div>
<div class="t" style="right:1677.0px;top:726.8px;font-size:11.8px;line-height:11.8px;text-align:right;color:#605e5c">Well 100/01-01-014-01W6</div>
<div class="t" style="left:189.4px;width:300px;top:728.2px;font-size:10.5px;line-height:10.5px;text-align:center;color:#fff;font-weight:700">720</div>
<div style="left:213.4px;top:746.2px;width:252.0px;height:17.2px;background:#8dc63f"></div>
<div class="t" style="right:1677.0px;top:749.1px;font-size:11.8px;line-height:11.8px;text-align:right;color:#605e5c">Well 100/01-01-015-01W1</div>
<div class="t" style="left:189.4px;width:300px;top:750.5px;font-size:10.5px;line-height:10.5px;text-align:center;color:#fff;font-weight:700">720</div>
<div style="left:213.4px;top:768.5px;width:252.0px;height:17.2px;background:#8dc63f"></div>
<div class="t" style="right:1677.0px;top:771.4px;font-size:11.8px;line-height:11.8px;text-align:right;color:#605e5c">Well 100/02-01-013-01W3</div>
<div class="t" style="left:189.4px;width:300px;top:772.8px;font-size:10.5px;line-height:10.5px;text-align:center;color:#fff;font-weight:700">720</div>
<div style="left:213.4px;top:790.8px;width:252.0px;height:17.2px;background:#8dc63f"></div>
<div class="t" style="right:1677.0px;top:793.7px;font-size:11.8px;line-height:11.8px;text-align:right;color:#605e5c">Well 100/02-01-013-01W6</div>
<div class="t" style="left:189.4px;width:300px;top:795.1px;font-size:10.5px;line-height:10.5px;text-align:center;color:#fff;font-weight:700">720</div>
<div style="left:213.4px;top:813.1px;width:252.0px;height:17.2px;background:#8dc63f"></div>
<div class="t" style="right:1677.0px;top:816.0px;font-size:11.8px;line-height:11.8px;text-align:right;color:#605e5c">Well 100/02-01-014-01W6</div>
<div class="t" style="left:189.4px;width:300px;top:817.4px;font-size:10.5px;line-height:10.5px;text-align:center;color:#fff;font-weight:700">720</div>
<div style="left:213.4px;top:835.4px;width:252.0px;height:17.2px;background:#8dc63f"></div>
<div class="t" style="right:1677.0px;top:838.3px;font-size:11.8px;line-height:11.8px;text-align:right;color:#605e5c">Well 100/02-01-014-01W7</div>
<div class="t" style="left:189.4px;width:300px;top:839.7px;font-size:10.5px;line-height:10.5px;text-align:center;color:#fff;font-weight:700">720</div>
<div style="left:213.4px;top:857.7px;width:252.0px;height:17.2px;background:#8dc63f"></div>
<div class="t" style="right:1677.0px;top:860.6px;font-size:11.8px;line-height:11.8px;text-align:right;color:#605e5c">Well 100/02-01-028-01W1</div>
<div class="t" style="left:189.4px;width:300px;top:862.0px;font-size:10.5px;line-height:10.5px;text-align:center;color:#fff;font-weight:700">720</div>
<div style="left:213.4px;top:880.0px;width:245.7px;height:17.2px;background:#8dc63f"></div>
<div class="t" style="right:1677.0px;top:882.9px;font-size:11.8px;line-height:11.8px;text-align:right;color:#605e5c">Well 100/02-01-026-01W1</div>
<div class="t" style="left:186.2px;width:300px;top:884.3px;font-size:10.5px;line-height:10.5px;text-align:center;color:#fff;font-weight:700">702</div>
<div style="left:213.4px;top:902.3px;width:189.0px;height:17.2px;background:#8dc63f"></div>
<div class="t" style="right:1677.0px;top:905.2px;font-size:11.8px;line-height:11.8px;text-align:right;color:#605e5c">Well 100/01-01-026-01W1</div>
<div class="t" style="left:157.9px;width:300px;top:906.6px;font-size:10.5px;line-height:10.5px;text-align:center;color:#fff;font-weight:700">540</div>
<div style="left:213.4px;top:924.6px;width:59.5px;height:17.2px;background:#8dc63f"></div>
<div class="t" style="right:1677.0px;top:927.5px;font-size:11.8px;line-height:11.8px;text-align:right;color:#605e5c">Pipeline 2A</div>
<div class="t" style="left:93.2px;width:300px;top:928.9px;font-size:10.5px;line-height:10.5px;text-align:center;color:#fff;font-weight:700">170</div>
<div style="left:213.4px;top:946.9px;width:59.5px;height:17.2px;background:#8dc63f"></div>
<div class="t" style="right:1677.0px;top:949.8px;font-size:11.8px;line-height:11.8px;text-align:right;color:#605e5c">Pipeline 2B</div>
<div class="t" style="left:93.2px;width:300px;top:951.2px;font-size:10.5px;line-height:10.5px;text-align:center;color:#fff;font-weight:700">170</div>
<div style="left:213.4px;top:969.2px;width:55.3px;height:17.2px;background:#8dc63f"></div>
<div class="t" style="right:1677.0px;top:972.1px;font-size:11.8px;line-height:11.8px;text-align:right;color:#605e5c">Well 100/02-01-013-01W9</div>
<div class="t" style="left:91.1px;width:300px;top:973.5px;font-size:10.5px;line-height:10.5px;text-align:center;color:#fff;font-weight:700">158</div>
<div style="left:213.4px;top:991.5px;width:53.2px;height:17.2px;background:#8dc63f"></div>
<div class="t" style="right:1677.0px;top:994.4px;font-size:11.8px;line-height:11.8px;text-align:right;color:#605e5c">Well 100/01-01-020-01W1</div>
<div class="t" style="left:90.0px;width:300px;top:995.8px;font-size:10.5px;line-height:10.5px;text-align:center;color:#fff;font-weight:700">152</div>
<div style="left:717px;top:617px;width:8px;height:409px;background:#f0f0f0;border-radius:4px"></div>
<div style="left:717px;top:617px;width:8px;height:366px;background:#b9b9b9;border-radius:4px"></div>
<div style="left:741px;top:571px;width:1114px;height:485px;background:#fbfbfb"></div>
<div class="t" style="left:1140.8px;top:587.0px;font-size:12px;line-height:12px;color:#333">Float Range</div>
<svg style="position:absolute;left:1218px;top:586.5px;" width="12" height="12" viewBox="0 0 12 12"><circle cx="6" cy="6" r="5" fill="#ec7f22"/></svg>
<div class="t" style="left:1230.5px;top:586.8px;font-size:12px;line-height:12px;color:#605e5c">Negative</div>
<svg style="position:absolute;left:1283px;top:586.5px;" width="12" height="12" viewBox="0 0 12 12"><circle cx="6" cy="6" r="5" fill="#ee8c1c"/></svg>
<div class="t" style="left:1295.5px;top:586.8px;font-size:12px;line-height:12px;color:#605e5c">0</div>
<svg style="position:absolute;left:1308.8px;top:586.5px;" width="12" height="12" viewBox="0 0 12 12"><circle cx="6" cy="6" r="5" fill="#9cc22a"/></svg>
<div class="t" style="left:1321.3px;top:586.8px;font-size:12px;line-height:12px;color:#605e5c">2 wks- 1 mth</div>
<svg style="position:absolute;left:1395.2px;top:586.5px;" width="12" height="12" viewBox="0 0 12 12"><circle cx="6" cy="6" r="5" fill="#8dc63f"/></svg>
<div class="t" style="left:1407.7px;top:586.8px;font-size:12px;line-height:12px;color:#605e5c">&gt; 1 mth</div>
<div style="left:748px;top:607px;width:1082px;height:444px;background:#fafafa"></div>
<div style="left:793px;top:607px;width:1037px;height:13px;background:#fff"></div>
<div style="left:748px;top:620px;width:330px;height:33.7px;background:#fff"></div>
<div style="left:1078px;top:620px;width:752px;height:25.2px;background:#fff"></div>
<svg style="position:absolute;left:752px;top:636px;" width="20" height="14" viewBox="0 0 20 14"><path d="M3 9.5 L9.5 3.2 L16 9.5" stroke="#111" stroke-width="2" fill="none"/></svg>
<div class="t" style="left:783.0px;top:636.5px;font-size:13.2px;line-height:13.2px;color:#aaaaaa">Collapse All</div>
<div style="left:1078px;top:623px;width:652px;height:2px;background:#222"></div>
<div style="left:1078px;top:620px;width:660px;height:30px;overflow:hidden">
<div style="left:15.1px;top:5px;width:1.3px;height:5px;background:#222"></div>
<div class="t" style="left:-44.3px;width:120px;text-align:center;top:11.4px;font-size:11.3px;line-height:11.3px;color:#222">Feb 2022</div>
<div style="left:68.2px;top:5px;width:1.3px;height:5px;background:#222"></div>
<div class="t" style="left:8.8px;width:120px;text-align:center;top:11.4px;font-size:11.3px;line-height:11.3px;color:#222">Mar 2022</div>
<div style="left:127.4px;top:5px;width:1.3px;height:5px;background:#222"></div>
<div class="t" style="left:68.0px;width:120px;text-align:center;top:11.4px;font-size:11.3px;line-height:11.3px;color:#222">Apr 2022</div>
<div style="left:184.4px;top:5px;width:1.3px;height:5px;background:#222"></div>
<div class="t" style="left:125.0px;width:120px;text-align:center;top:11.4px;font-size:11.3px;line-height:11.3px;color:#222">May 2022</div>
<div style="left:243.9px;top:5px;width:1.3px;height:5px;background:#222"></div>
<div class="t" style="left:184.5px;width:120px;text-align:center;top:11.4px;font-size:11.3px;line-height:11.3px;color:#222">Jun 2022</div>
<div style="left:301.0px;top:5px;width:1.3px;height:5px;background:#222"></div>
<div class="t" style="left:241.6px;width:120px;text-align:center;top:11.4px;font-size:11.3px;line-height:11.3px;color:#222">Jul 2022</div>
<div style="left:360.2px;top:5px;width:1.3px;height:5px;background:#222"></div>
<div class="t" style="left:300.8px;width:120px;text-align:center;top:11.4px;font-size:11.3px;line-height:11.3px;color:#222">Aug 2022</div>
<div style="left:419.4px;top:5px;width:1.3px;height:5px;background:#222"></div>
<div class="t" style="left:360.0px;width:120px;text-align:center;top:11.4px;font-size:11.3px;line-height:11.3px;color:#222">Sep 2022</div>
<div style="left:476.9px;top:5px;width:1.3px;height:5px;background:#222"></div>
<div class="t" style="left:417.5px;width:120px;text-align:center;top:11.4px;font-size:11.3px;line-height:11.3px;color:#222">Oct 2022</div>
<div style="left:535.8px;top:5px;width:1.3px;height:5px;background:#222"></div>
<div class="t" style="left:476.4px;width:120px;text-align:center;top:11.4px;font-size:11.3px;line-height:11.3px;color:#222">Nov 2022</div>
<div style="left:593.2px;top:5px;width:1.3px;height:5px;background:#222"></div>
<div class="t" style="left:533.8px;width:120px;text-align:center;top:11.4px;font-size:11.3px;line-height:11.3px;color:#222">Dec 2022</div>
</div>
<div style="left:748px;top:661.5px;width:1082px;height:1.5px;background:#cfcfcf"></div>
<div style="left:748px;top:662px;width:1082px;height:370px;overflow:hidden">
<div style="left:0;top:23.7px;width:1082px;height:1px;background:#d4d4d4"></div>
<div style="left:0;top:45.7px;width:1082px;height:1px;background:#d4d4d4"></div>
<svg style="position:absolute;left:3px;top:5.6px" width="14" height="14"><rect x="1" y="1" width="12" height="12" rx="2" stroke="#6f8081" stroke-width="1" fill="#fff"/><path d="M4.5 7 L9.5 7" stroke="#7f8f90" stroke-width="1"/></svg>
<div class="t" style="left:21.5px;top:6.9px;font-size:12.8px;line-height:12.8px;font-weight:700;color:#222">Facility <span style="letter-spacing:0.72px">2</span>B</div>
<div class="t" style="left:27px;top:28.6px;font-size:12.8px;line-height:12.8px;font-style:italic;color:#333;letter-spacing:0.23px">07_210 - Gathering System Construction</div>
<div style="left:0;top:67.8px;width:1082px;height:1px;background:#d4d4d4"></div>
<div style="left:0;top:89.8px;width:1082px;height:1px;background:#d4d4d4"></div>
<svg style="position:absolute;left:3px;top:49.7px" width="14" height="14"><rect x="1" y="1" width="12" height="12" rx="2" stroke="#6f8081" stroke-width="1" fill="#fff"/><path d="M4.5 7 L9.5 7" stroke="#7f8f90" stroke-width="1"/></svg>
<div class="t" style="left:21.5px;top:51.0px;font-size:12.8px;line-height:12.8px;font-weight:700;color:#222">Pipeline <span style="letter-spacing:0.72px">2</span>A</div>
<div class="t" style="left:27px;top:72.7px;font-size:12.8px;line-height:12.8px;font-style:italic;color:#333;letter-spacing:0.23px">07_210 - Gathering System Construction</div>
<div style="left:0;top:111.9px;width:1082px;height:1px;background:#d4d4d4"></div>
<div style="left:0;top:133.9px;width:1082px;height:1px;background:#d4d4d4"></div>
<svg style="position:absolute;left:3px;top:93.8px" width="14" height="14"><rect x="1" y="1" width="12" height="12" rx="2" stroke="#6f8081" stroke-width="1" fill="#fff"/><path d="M4.5 7 L9.5 7" stroke="#7f8f90" stroke-width="1"/></svg>
<div class="t" style="left:21.5px;top:95.1px;font-size:12.8px;line-height:12.8px;font-weight:700;color:#222">Pipeline <span style="letter-spacing:0.72px">2</span>B</div>
<div class="t" style="left:27px;top:116.8px;font-size:12.8px;line-height:12.8px;font-style:italic;color:#333;letter-spacing:0.23px">07_210 - Gathering System Construction</div>
<div style="left:0;top:156.0px;width:1082px;height:1px;background:#d4d4d4"></div>
<div style="left:0;top:178.0px;width:1082px;height:1px;background:#d4d4d4"></div>
<svg style="position:absolute;left:3px;top:137.9px" width="14" height="14"><rect x="1" y="1" width="12" height="12" rx="2" stroke="#6f8081" stroke-width="1" fill="#fff"/><path d="M4.5 7 L9.5 7" stroke="#7f8f90" stroke-width="1"/></svg>
<div class="t" style="left:21.5px;top:139.2px;font-size:12.8px;line-height:12.8px;font-weight:700;color:#222"><span style="letter-spacing:0.72px">*</span>Well <span style="letter-spacing:0.72px">100/02-01-013-01</span>W<span style="letter-spacing:0.72px">10</span></div>
<div class="t" style="left:27px;top:160.9px;font-size:12.8px;line-height:12.8px;font-style:italic;color:#333;letter-spacing:0.23px">07_210 - Pipelines Construction</div>
<div style="left:0;top:200.1px;width:1082px;height:1px;background:#d4d4d4"></div>
<div style="left:0;top:222.1px;width:1082px;height:1px;background:#d4d4d4"></div>
<svg style="position:absolute;left:3px;top:182.0px" width="14" height="14"><rect x="1" y="1" width="12" height="12" rx="2" stroke="#6f8081" stroke-width="1" fill="#fff"/><path d="M4.5 7 L9.5 7" stroke="#7f8f90" stroke-width="1"/></svg>
<div class="t" style="left:21.5px;top:183.3px;font-size:12.8px;line-height:12.8px;font-weight:700;color:#222">Gathering Pipeline <span style="letter-spacing:0.72px">3</span>B</div>
<div class="t" style="left:27px;top:205.0px;font-size:12.8px;line-height:12.8px;font-style:italic;color:#333;letter-spacing:0.23px">07_210 - Pipelines Construction</div>
<div style="left:0;top:244.2px;width:1082px;height:1px;background:#d4d4d4"></div>
<div style="left:0;top:266.2px;width:1082px;height:1px;background:#d4d4d4"></div>
<svg style="position:absolute;left:3px;top:226.1px" width="14" height="14"><rect x="1" y="1" width="12" height="12" rx="2" stroke="#6f8081" stroke-width="1" fill="#fff"/><path d="M4.5 7 L9.5 7" stroke="#7f8f90" stroke-width="1"/></svg>
<div class="t" style="left:21.5px;top:227.4px;font-size:12.8px;line-height:12.8px;font-weight:700;color:#222">Well <span style="letter-spacing:0.72px">100/01-01-013-01</span>W<span style="letter-spacing:0.72px">4</span></div>
<div class="t" style="left:27px;top:249.1px;font-size:12.8px;line-height:12.8px;font-style:italic;color:#333;letter-spacing:0.23px">07_210 - Pipelines Construction</div>
<div style="left:0;top:288.3px;width:1082px;height:1px;background:#d4d4d4"></div>
<div style="left:0;top:310.3px;width:1082px;height:1px;background:#d4d4d4"></div>
<svg style="position:absolute;left:3px;top:270.2px" width="14" height="14"><rect x="1" y="1" width="12" height="12" rx="2" stroke="#6f8081" stroke-width="1" fill="#fff"/><path d="M4.5 7 L9.5 7" stroke="#7f8f90" stroke-width="1"/></svg>
<div class="t" style="left:21.5px;top:271.5px;font-size:12.8px;line-height:12.8px;font-weight:700;color:#222">Well <span style="letter-spacing:0.72px">100/01-01-013-01</span>W<span style="letter-spacing:0.72px">6</span></div>
<div class="t" style="left:27px;top:293.2px;font-size:12.8px;line-height:12.8px;font-style:italic;color:#333;letter-spacing:0.23px">07_210 - Pipelines Construction</div>
<div style="left:0;top:332.4px;width:1082px;height:1px;background:#d4d4d4"></div>
<div style="left:0;top:354.4px;width:1082px;height:1px;background:#d4d4d4"></div>
<svg style="position:absolute;left:3px;top:314.3px" width="14" height="14"><rect x="1" y="1" width="12" height="12" rx="2" stroke="#6f8081" stroke-width="1" fill="#fff"/><path d="M4.5 7 L9.5 7" stroke="#7f8f90" stroke-width="1"/></svg>
<div class="t" style="left:21.5px;top:315.6px;font-size:12.8px;line-height:12.8px;font-weight:700;color:#222">Well <span style="letter-spacing:0.72px">100/01-01-014-01</span>W<span style="letter-spacing:0.72px">6</span></div>
<div class="t" style="left:27px;top:337.3px;font-size:12.8px;line-height:12.8px;font-style:italic;color:#333;letter-spacing:0.23px">07_210 - Pipelines Construction</div>
<div style="left:0;top:376.5px;width:1082px;height:1px;background:#d4d4d4"></div>
<div style="left:0;top:398.5px;width:1082px;height:1px;background:#d4d4d4"></div>
<svg style="position:absolute;left:3px;top:358.4px" width="14" height="14"><rect x="1" y="1" width="12" height="12" rx="2" stroke="#6f8081" stroke-width="1" fill="#fff"/><path d="M4.5 7 L9.5 7" stroke="#7f8f90" stroke-width="1"/></svg>
<div class="t" style="left:21.5px;top:359.7px;font-size:12.8px;line-height:12.8px;font-weight:700;color:#222">Well <span style="letter-spacing:0.72px">100/01-01-015-01</span>W<span style="letter-spacing:0.72px">1</span></div>
<div class="t" style="left:27px;top:381.4px;font-size:12.8px;line-height:12.8px;font-style:italic;color:#333;letter-spacing:0.23px">07_210 - Pipelines Construction</div>
</div>
<div style="left:1078px;top:662px;width:1px;height:370px;background:#d4d4d4"></div>
<div style="left:1398px;top:689.5px;width:121.70000000000005px;height:14.6px;background:#cfe08f;border-radius:7.3px"></div>
<div style="left:1364.8px;top:733.7px;width:121.90000000000009px;height:14.6px;background:#f2c185;border-radius:7.3px"></div>
<div style="left:1174.4px;top:777.9000000000001px;width:121.5px;height:14.6px;background:#f2c185;border-radius:7.3px"></div>
<div style="left:1220.4px;top:821.7px;width:179.0px;height:14.6px;background:#c6e39b;border-radius:7.3px"></div>
<div style="left:1159.4px;top:866.1px;width:121.59999999999991px;height:14.6px;background:#f2c185;border-radius:7.3px"></div>
<div style="left:1224.3px;top:910.0px;width:121.70000000000005px;height:14.6px;background:#f2c185;border-radius:7.3px"></div>
<div style="left:1197.9px;top:953.9000000000001px;width:121.19999999999982px;height:14.6px;background:#f2c185;border-radius:7.3px"></div>
<div style="left:1185.9px;top:998.1px;width:121.79999999999995px;height:14.6px;background:#f2c185;border-radius:7.3px"></div>
<svg style="position:absolute;left:1411px;top:680px;" width="4" height="75" viewBox="0 0 4 75"><path d="M2 9 L2 24 M2 53 L2 68" stroke="#fff" stroke-width="1.6" stroke-dasharray="3,2"/></svg>
<div style="left:748px;top:1032px;width:1082px;height:17px;background:#f1f1f1"></div>
<div style="left:999px;top:1033px;width:809px;height:15px;background:#c1c1c1"></div>
<svg style="position:absolute;left:752px;top:1034px;" width="12" height="14" viewBox="0 0 12 14"><path d="M8 3 L3.5 7 L8 11 Z" fill="#505050"/></svg>
<svg style="position:absolute;left:1815px;top:1034px;" width="12" height="14" viewBox="0 0 12 14"><path d="M4 3 L8.5 7 L4 11 Z" fill="#a0a0a0"/></svg>
<div style="left:1830px;top:607px;width:20px;height:444px;background:#f1f1f1"></div>
<div style="left:1832px;top:628px;width:16px;height:180px;background:#c1c1c1"></div>
<svg style="position:absolute;left:1833px;top:612px;" width="14" height="10" viewBox="0 0 14 10"><path d="M3 7 L7 3 L11 7 Z" fill="#a0a0a0"/></svg>
<svg style="position:absolute;left:1833px;top:1014px;" width="14" height="10" viewBox="0 0 14 10"><path d="M3 3 L7 7 L11 3 Z" fill="#505050"/></svg>
<div style="left:1830px;top:1032px;width:20px;height:19px;background:#dcdcdc"></div>
</body></html>
